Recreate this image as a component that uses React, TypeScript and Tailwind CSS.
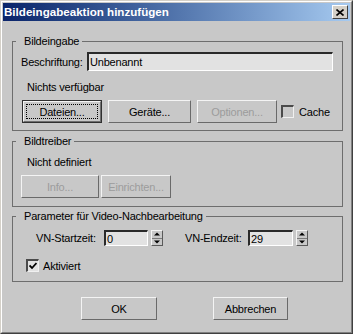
import React from "react";

function Btn({
  w,
  children,
  disabled,
  def,
}: {
  w: number;
  children: React.ReactNode;
  disabled?: boolean;
  def?: boolean;
}) {
  if (def) {
    return (
      <div
        className="h-[23px] border border-[#303030] bg-[#c8c8c8] flex"
        style={{ width: w }}
      >
        <div className="flex-1 border border-t-[#f4f4f4] border-l-[#f4f4f4] border-b-[#6e6e6e] border-r-[#6e6e6e] p-[2px] flex">
          <div className="flex-1 border border-dotted border-black flex items-center justify-center leading-[14px]">
            {children}
          </div>
        </div>
      </div>
    );
  }
  return (
    <div
      className={
        "h-[23px] bg-[#c8c8c8] border border-t-[#f4f4f4] border-l-[#f4f4f4] border-b-[#6a6a6a] border-r-[#6a6a6a] flex items-center justify-center leading-[14px] " +
        (disabled ? "text-[#9c9c9c]" : "text-black")
      }
      style={{ width: w }}
    >
      {children}
    </div>
  );
}

function Group({
  label,
  h,
  mt,
  children,
}: {
  label: string;
  h: number;
  mt: number;
  children: React.ReactNode;
}) {
  return (
    <div
      className="relative w-[331px] border border-[#6e6e6e] flex flex-col"
      style={{ height: h, marginTop: mt }}
    >
      <div className="absolute top-[-8px] left-[3px] bg-[#c8c8c8] pl-[8px] pr-[3px] leading-[14px]">
        {label}
      </div>
      {children}
    </div>
  );
}

function Spinner() {
  return (
    <div className="w-[12px] h-[16px] flex flex-col bg-[#c8c8c8] border border-t-[#f4f4f4] border-l-[#f4f4f4] border-b-[#5a5a5a] border-r-[#5a5a5a]">
      <div className="flex-1 flex items-center justify-center border-b border-[#7a7a7a]">
        <svg width="6" height="4" viewBox="0 0 6 4">
          <polygon points="3,0.5 6,3.5 0,3.5" fill="#000" />
        </svg>
      </div>
      <div className="flex-1 flex items-center justify-center">
        <svg width="6" height="4" viewBox="0 0 6 4">
          <polygon points="0,0.5 6,0.5 3,3.5" fill="#000" />
        </svg>
      </div>
    </div>
  );
}

function Field({ w, h, value }: { w: number; h: number; value: string }) {
  return (
    <div
      className="bg-[#e2e2e2] border-t-2 border-l-2 border-t-[#2a2a2a] border-l-[#2a2a2a] border-b border-r border-b-white border-r-white flex items-center pl-[1px] leading-[14px]"
      style={{ width: w, height: h }}
    >
      {value}
    </div>
  );
}

function Check({ checked }: { checked?: boolean }) {
  return (
    <div
      className={
        "w-[13px] h-[13px] border-t-2 border-l-2 border-t-[#4a4a4a] border-l-[#4a4a4a] border-b border-r border-b-[#f0f0f0] border-r-[#f0f0f0] flex items-center justify-center " +
        (checked ? "bg-[#e2e2e2]" : "bg-[#c8c8c8]")
      }
    >
      {checked && (
        <svg width="8" height="8" viewBox="0 0 8 8">
          <polyline
            points="0.5,3.5 3,6 7.5,1"
            fill="none"
            stroke="#000"
            strokeWidth="1.8"
          />
        </svg>
      )}
    </div>
  );
}

export default function App() {
  return (
    <div className="w-[353px] h-[334px] bg-[#c8c8c8] border border-t-[#d4d0c8] border-l-[#d4d0c8] border-r-[#404040] border-b-[#404040] font-['Liberation_Sans',Arial,sans-serif] text-[11px] tracking-[-0.2px] text-black">
      <div className="h-full border border-t-white border-l-white border-r-[#808080] border-b-[#808080] p-px flex flex-col">
        {/* Title bar */}
        <div className="h-[18px] flex items-center justify-between pl-[1px] pr-[2px] bg-gradient-to-r from-[#0a246a] to-[#a6caf0]">
          <span className="text-white font-bold text-[11.6px] tracking-normal leading-[14px]">
            Bildeingabeaktion hinzufügen
          </span>
          <div className="w-[16px] h-[14px] bg-[#d4d0c8] border border-t-white border-l-white border-b-[#404040] border-r-[#404040] flex items-center justify-center">
            <svg width="8" height="7" viewBox="0 0 8 7">
              <path d="M0.5 0.5 L7.5 6.5 M7.5 0.5 L0.5 6.5" stroke="#000" strokeWidth="1.6" />
            </svg>
          </div>
        </div>

        {/* Client */}
        <div className="flex-1 flex flex-col pl-[9px]">
          <Group label="Bildeingabe" h={90} mt={20}>
            <div className="mt-[10px] pl-[8px] flex items-center h-[19px]">
              <span className="w-[66px] leading-[14px]">Beschriftung:</span>
              <Field w={246} h={19} value="Unbenannt" />
            </div>
            <div className="mt-[9px] pl-[14px] leading-[14px]">Nichts verfügbar</div>
            <div className="mt-[6px] pl-[9px] flex items-center h-[23px]">
              <Btn w={80} def>
                Dateien...
              </Btn>
              <div className="ml-[6px]">
                <Btn w={83}>Geräte...</Btn>
              </div>
              <div className="ml-[6px]">
                <Btn w={80} disabled>
                  Optionen...
                </Btn>
              </div>
              <div className="ml-[4px]">
                <Check />
              </div>
              <span className="ml-[5px] leading-[14px]">Cache</span>
            </div>
          </Group>

          <Group label="Bildtreiber" h={66} mt={10}>
            <div className="mt-[13px] pl-[14px] leading-[14px]">Nicht definiert</div>
            <div className="mt-[6px] pl-[8px] flex items-center h-[23px]">
              <Btn w={78} disabled>
                Info...
              </Btn>
              <div className="ml-[2px]">
                <Btn w={70} disabled>
                  Einrichten...
                </Btn>
              </div>
            </div>
          </Group>

          <Group label="Parameter für Video-Nachbearbeitung" h={66} mt={9}>
            <div className="mt-[13px] pl-[23px] flex items-center h-[16px]">
              <span className="w-[68px] leading-[14px]">VN-Startzeit:</span>
              <Field w={44} h={16} value="0" />
              <div className="ml-[3px]">
                <Spinner />
              </div>
              <span className="ml-[22px] w-[63px] leading-[14px]">VN-Endzeit:</span>
              <Field w={45} h={16} value="29" />
              <div className="ml-[3px]">
                <Spinner />
              </div>
            </div>
            <div className="mt-[13px] pl-[13px] flex items-center h-[13px]">
              <Check checked />
              <span className="ml-[4px] leading-[14px]">Aktiviert</span>
            </div>
          </Group>

          <div className="mt-[15px] pl-[69px] flex items-center">
            <Btn w={76}>OK</Btn>
            <div className="ml-[56px]">
              <Btn w={75}>Abbrechen</Btn>
            </div>
          </div>
        </div>
      </div>
    </div>
  );
}
